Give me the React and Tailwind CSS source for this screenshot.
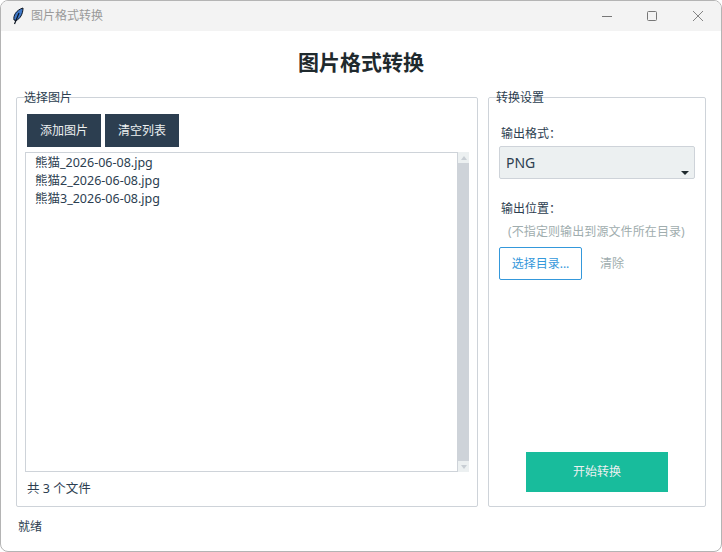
import React from "react";

const files = [
  "熊猫_2026-06-08.jpg",
  "熊猫2_2026-06-08.jpg",
  "熊猫3_2026-06-08.jpg",
];

const font = "font-['Noto_Sans','Noto_Sans_CJK_SC',sans-serif]";

const Feather = () => (
  <svg width="12" height="18" viewBox="0 0 12 18">
    <path d="M2 13C1 9 4 3 11 1C11 7 8 12 4 13.5Z" fill="#3f78c8" stroke="#0b1420" strokeWidth="1" />
    <path d="M2.5 17L7 6" stroke="#0b1420" strokeWidth="1.2" fill="none" />
  </svg>
);

const App = () => {
  return (
    <div className={`w-[722px] h-[552px] bg-white flex flex-col overflow-hidden rounded-lg border border-[#b4b4b4] text-[12px] leading-[18px] text-[#2c3e50] ${font}`}>
      {/* Barre de titre */}
      <div className="h-[30px] shrink-0 bg-[#f3f3f3] flex items-center pl-[11px]">
        <Feather />
        <span className="ml-[7px] text-[12px] text-[#9a9a9a]">图片格式转换</span>
        <div className="ml-auto flex items-center text-[#777]">
          <div className="w-[44px] flex justify-center">
            <svg width="10" height="10" viewBox="0 0 10 10"><path d="M0 5.5H10" stroke="currentColor" /></svg>
          </div>
          <div className="w-[46px] flex justify-center">
            <svg width="10" height="10" viewBox="0 0 10 10"><rect x="0.5" y="0.5" width="9" height="9" rx="1" fill="none" stroke="currentColor" /></svg>
          </div>
          <div className="w-[46px] flex justify-center">
            <svg width="10" height="10" viewBox="0 0 10 10"><path d="M0 0L10 10M10 0L0 10" stroke="currentColor" strokeWidth="0.9" /></svg>
          </div>
        </div>
      </div>

      <h1 className="h-[66px] shrink-0 pb-[4px] flex items-center justify-center text-[21px] font-bold text-[#1f2a2e]">图片格式转换</h1>

      <div className="flex gap-[10px] pl-[15px] h-[410px] shrink-0">
        {/* Liste des images */}
        <div className="relative w-[462px] border border-[#ced3d9] rounded-[2px] pt-[16px] flex flex-col">
          <span className="absolute left-[7px] top-[-9px]">选择图片</span>
          <div className="flex gap-1 pl-[10px]">
            <button className="w-[74px] h-[33px] bg-[#2c3e50] text-[#ecf0f1]">添加图片</button>
            <button className="w-[74px] h-[33px] bg-[#2c3e50] text-[#ecf0f1]">清空列表</button>
          </div>
          <div className="flex ml-[8px] mt-[5px] h-[320px] w-[444px]">
            <div className="w-[433px] border border-[#ced3d9] pl-[9px] pt-[1px] text-[12.5px]">
              {files.map((name) => (
                <div key={name} className="h-[18px]">{name}</div>
              ))}
            </div>
            <div className="w-[11px] flex flex-col bg-[#ecf0f1]">
              <div className="h-[11px] flex items-center justify-center">
                <div className="border-x-[3px] border-b-[4px] border-x-transparent border-b-[#c8ced4]" />
              </div>
              <div className="flex-1 bg-[#ced3d9]" />
              <div className="h-[11px] flex items-center justify-center">
                <div className="border-x-[3px] border-t-[4px] border-x-transparent border-t-[#c8ced4]" />
              </div>
            </div>
          </div>
          <div className="pl-[10px] mt-[8px] text-[12.5px]">共 3 个文件</div>
        </div>

        {/* Réglages de conversion */}
        <div className="relative w-[218px] border border-[#ced3d9] rounded-[2px] pt-[27px] pl-[10px] flex flex-col">
          <span className="absolute left-[7px] top-[-9px]">转换设置</span>
          <div className="pl-[2px]">输出格式：</div>
          <div className="relative mt-[3px] w-[196px] h-[33px] bg-[#ecf0f1] border border-[#ced3d9] rounded-[2px] pl-[6px] flex items-center text-[14px]">
            PNG
            <div className="absolute right-[5px] bottom-[3px] border-x-[4px] border-t-[4px] border-x-transparent border-t-[#1f2a2e]" />
          </div>
          <div className="pl-[2px] mt-[21px]">输出位置：</div>
          <div className="pl-[9px] mt-[5px] tracking-[0.1px] text-[#a0adae]">(不指定则输出到源文件所在目录)</div>
          <div className="flex items-center mt-[6px]">
            <button className="w-[83px] h-[33px] bg-white border border-[#3498db] rounded-[2px] text-[#3498db]">选择目录...</button>
            <span className="ml-[18px] text-[#a0adae]">清除</span>
          </div>
          <button className="mt-[172px] ml-[27px] w-[142px] h-[40px] bg-[#18bc9c] text-[#ecf0f1]">开始转换</button>
        </div>
      </div>

      <div className="pl-[17px] mt-[11px]">就绪</div>
    </div>
  );
};

export default App;
